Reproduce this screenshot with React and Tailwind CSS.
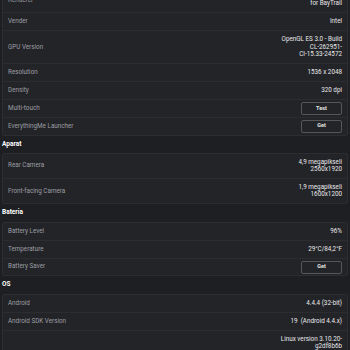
import React from 'react';

const sections = [
    {
        title: null,
        rows: [
            { label: 'Renderer', value: ['Intel(R) HD Graphics', 'for BayTrail'] },
            { label: 'Vender', value: ['Intel'] },
            { label: 'GPU Version', value: ['OpenGL ES 3.0 - Build', 'CL-262951-', 'CI-15.33-24572'] },
            { label: 'Resolution', value: ['1536 x 2048'] },
            { label: 'Density', value: ['320 dpi'] },
            { label: 'Multi-touch', button: 'Test' },
            { label: 'EverythingMe Launcher', button: 'Get' },
        ],
    },
    {
        title: 'Aparat',
        rows: [
            { label: 'Rear Camera', value: ['4,9 megapikseli', '2560x1920'] },
            { label: 'Front-facing Camera', value: ['1,9 megapikseli', '1600x1200'] },
        ],
    },
    {
        title: 'Bateria',
        rows: [
            { label: 'Battery Level', value: ['96%'] },
            { label: 'Temperature', value: ['29°C/84,2°F'] },
            { label: 'Battery Saver', button: 'Get' },
        ],
    },
    {
        title: 'OS',
        rows: [
            { label: 'Android', value: ['4.4.4 (32-bit)'] },
            { label: 'Android SDK Version', value: ['19  (Android 4.4.x)'] },
            { label: 'Kernel', value: ['Linux version 3.10.20-', 'g2df8b6b', ''], hideLabel: true },
        ],
    },
];

const Row = ({ row, last }) => (
    <div className={`flex items-center justify-between px-[5px] ${row.button ? 'py-[1.9px]' : 'py-[4.85px]'} ${last ? '' : 'border-b border-[#2c2d31]'}`}>
        <span className="text-[#9d9ea2]">{row.hideLabel ? '' : row.label}</span>
        {row.button ? (
            <button className="w-[41px] h-[13px] border border-[#55565a] rounded-[2px] text-[5.5px] font-bold text-[#e6e6e6] leading-none">
                {row.button}
            </button>
        ) : (
            <div className="text-right text-[#e9e9ea]">
                {row.value.map((v, i) => (
                    <div key={i} className="whitespace-pre">{v}</div>
                ))}
            </div>
        )}
    </div>
);

const App = () => {
    return (
        <div className="w-[350px] h-[350px] overflow-hidden bg-[#1e1f22]" style={{ fontFamily: 'Roboto, "Liberation Sans", sans-serif' }}>
            <div className="-mt-[12.8px] px-[2px] text-[6.3px] leading-[7.3px]">
                {sections.map((s, si) => (
                    <div key={si}>
                        {s.title && (
                            <div className="h-[17.3px] flex items-center font-bold text-white text-[6.5px]">{s.title}</div>
                        )}
                        <div className="bg-[#232428] border border-[#2c2d31] rounded-[2px]">
                            {s.rows.map((r, ri) => (
                                <Row key={ri} row={r} last={ri === s.rows.length - 1} />
                            ))}
                        </div>
                    </div>
                ))}
            </div>
        </div>
    );
};

export default App;
